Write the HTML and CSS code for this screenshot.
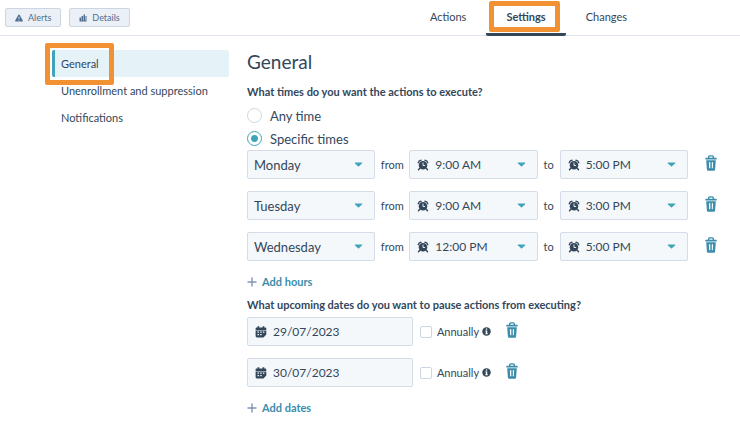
FILE: index.html
```html
<!DOCTYPE html>
<html lang="en">
<head>
  <meta charset="UTF-8">
  <meta name="viewport" content="width=device-width, initial-scale=1.0">
  <title>Workflow Settings</title>
  <link rel="stylesheet" href="styles.css">
</head>
<body>
  <svg class="sprite" aria-hidden="true">
    <symbol id="icon-alert" viewBox="0 0 16 16">
      <path fill="currentColor" fill-rule="evenodd" d="M8 1a1.4 1.4 0 0 1 1.2.7l6.4 11.2A1.4 1.4 0 0 1 14.4 15H1.6a1.4 1.4 0 0 1-1.2-2.1L6.8 1.7A1.4 1.4 0 0 1 8 1zM7 5.5l.3 4.5h1.4L9 5.5zM7 11.3v1.9h2v-1.9z"/>
    </symbol>
    <symbol id="icon-chart" viewBox="0 0 16 16">
      <path fill="currentColor" d="M1 7h3v6H1zM5 4h3v9H5zM9 1h3v12H9zM13 4h2v9h-2zM1 13h14v2H1z"/>
    </symbol>
    <symbol id="icon-clock" viewBox="0 0 24 24">
      <circle cx="12" cy="12.5" r="8.5" fill="currentColor"/>
      <path fill="none" stroke="currentColor" stroke-width="2.8" stroke-linecap="round" d="M2.500 7.500C3 4.500 5 2.800 8 2.500M21.500 7.500C21 4.500 19 2.800 16 2.500M5.500 18.500L3 21.500M18.500 18.500l2.500 3"/>
      <path fill="none" stroke="#f5f8fa" stroke-width="1.8" stroke-linecap="round" d="M12 8v5h3.5"/>
    </symbol>
    <symbol id="icon-caret" viewBox="0 0 10 6">
      <path fill="#3fa3b9" d="M1 .5h8a.6.6 0 0 1 .4 1L5.6 5.2a.9.9 0 0 1-1.2 0L.6 1.5A.6.6 0 0 1 1 .5z"/>
    </symbol>
    <symbol id="icon-trash" viewBox="0 0 12 16">
      <path fill="none" stroke="currentColor" stroke-width="1.4" d="M3.7 3V1.9Q3.7.9 4.7.9h2.6q1 0 1 1V3"/>
      <rect x=".3" y="2.800" width="11.4" height="1.7" rx=".6" fill="currentColor"/>
      <path fill="currentColor" fill-rule="evenodd" d="M1.2 5.3h9.600l-.7 9.200a1.300 1.300 0 0 1-1.300 1.200H3.200a1.300 1.300 0 0 1-1.300-1.200zM3.900 7.300l.3 6h1.100v-6zM6.800 7.300v6h1l.3-6z"/>
    </symbol>
    <symbol id="icon-calendar" viewBox="0 0 12 12">
      <path fill="currentColor" d="M1.5 1.5h1V.3h1.7v1.2h3.4V.3h1.7v1.2h1q1 0 1 1V4H.6V2.5q0-1 .9-1zM.6 4.6h10.7v4L8.5 11.500H2q-1.400 0-1.400-1.400z"/>
      <path fill="#f5f8fa" d="M2.5 5.6h1.5v1.2H2.5zM5.2 5.6h1.5v1.2H5.2zM7.900 5.600h1.500v1.200H7.900zM2.500 8h1.500v1.200H2.500zM5.200 8h1.500v1.200H5.200z"/>
    </symbol>
    <symbol id="icon-info" viewBox="0 0 10 10">
      <circle cx="5" cy="5" r="4.7" fill="currentColor"/>
      <path fill="#fff" d="M4.3 1.8h1.5v1.3H4.3zM3.7 4h2.1v3h.6v1H3.7V7h.6V5h-.6z"/>
    </symbol>
    <symbol id="icon-plus" viewBox="0 0 10 10">
      <path fill="none" stroke="#7c98b6" stroke-width="1.4" stroke-linecap="round" d="M5 1v8M1 5h8"/>
    </symbol>
  </svg>

  <header class="top-bar">
    <div class="toolbar">
      <button class="tool-btn"><svg class="tool-icon"><use href="#icon-alert"/></svg>Alerts</button>
      <button class="tool-btn"><svg class="tool-icon"><use href="#icon-chart"/></svg>Details</button>
    </div>
    <nav class="tabs">
      <a href="#actions">Actions</a>
      <a href="#settings" class="active">Settings</a>
      <a href="#changes">Changes</a>
    </nav>
  </header>

  <div class="page">
    <nav class="sidebar">
      <a href="#general" class="active">General</a>
      <a href="#unenrollment">Unenrollment and suppression</a>
      <a href="#notifications">Notifications</a>
    </nav>

    <main class="content">
      <h1>General</h1>

      <h2>What times do you want the actions to execute?</h2>
      <div class="radio-group">
        <label class="radio"><input type="radio" name="times">Any time</label>
        <label class="radio"><input type="radio" name="times" checked>Specific times</label>
      </div>

      <div class="rows">
        <div class="time-row">
          <div class="field">
            <select aria-label="Day"><option>Monday</option></select>
            <svg class="caret"><use href="#icon-caret"/></svg>
          </div>
          <span class="word">from</span>
          <div class="field with-icon">
            <select aria-label="Start time"><option>9:00 AM</option></select>
            <svg class="field-icon"><use href="#icon-clock"/></svg>
            <svg class="caret"><use href="#icon-caret"/></svg>
          </div>
          <span class="word">to</span>
          <div class="field with-icon">
            <select aria-label="End time"><option>5:00 PM</option></select>
            <svg class="field-icon"><use href="#icon-clock"/></svg>
            <svg class="caret"><use href="#icon-caret"/></svg>
          </div>
          <button class="delete-btn" aria-label="Delete"><svg><use href="#icon-trash"/></svg></button>
        </div>

        <div class="time-row">
          <div class="field">
            <select aria-label="Day"><option>Tuesday</option></select>
            <svg class="caret"><use href="#icon-caret"/></svg>
          </div>
          <span class="word">from</span>
          <div class="field with-icon">
            <select aria-label="Start time"><option>9:00 AM</option></select>
            <svg class="field-icon"><use href="#icon-clock"/></svg>
            <svg class="caret"><use href="#icon-caret"/></svg>
          </div>
          <span class="word">to</span>
          <div class="field with-icon">
            <select aria-label="End time"><option>3:00 PM</option></select>
            <svg class="field-icon"><use href="#icon-clock"/></svg>
            <svg class="caret"><use href="#icon-caret"/></svg>
          </div>
          <button class="delete-btn" aria-label="Delete"><svg><use href="#icon-trash"/></svg></button>
        </div>

        <div class="time-row">
          <div class="field">
            <select aria-label="Day"><option>Wednesday</option></select>
            <svg class="caret"><use href="#icon-caret"/></svg>
          </div>
          <span class="word">from</span>
          <div class="field with-icon">
            <select aria-label="Start time"><option>12:00 PM</option></select>
            <svg class="field-icon"><use href="#icon-clock"/></svg>
            <svg class="caret"><use href="#icon-caret"/></svg>
          </div>
          <span class="word">to</span>
          <div class="field with-icon">
            <select aria-label="End time"><option>5:00 PM</option></select>
            <svg class="field-icon"><use href="#icon-clock"/></svg>
            <svg class="caret"><use href="#icon-caret"/></svg>
          </div>
          <button class="delete-btn" aria-label="Delete"><svg><use href="#icon-trash"/></svg></button>
        </div>
      </div>
      <button class="add-btn"><svg><use href="#icon-plus"/></svg>Add hours</button>

      <h2>What upcoming dates do you want to pause actions from executing?</h2>
      <div class="rows">
        <div class="date-row">
          <div class="field with-icon">
            <input type="text" aria-label="Date" value="29/07/2023">
            <svg class="field-icon"><use href="#icon-calendar"/></svg>
          </div>
          <label class="check"><input type="checkbox">Annually</label>
          <svg class="info"><use href="#icon-info"/></svg>
          <button class="delete-btn" aria-label="Delete"><svg><use href="#icon-trash"/></svg></button>
        </div>
        <div class="date-row">
          <div class="field with-icon">
            <input type="text" aria-label="Date" value="30/07/2023">
            <svg class="field-icon"><use href="#icon-calendar"/></svg>
          </div>
          <label class="check"><input type="checkbox">Annually</label>
          <svg class="info"><use href="#icon-info"/></svg>
          <button class="delete-btn" aria-label="Delete"><svg><use href="#icon-trash"/></svg></button>
        </div>
      </div>
      <button class="add-btn"><svg><use href="#icon-plus"/></svg>Add dates</button>
    </main>
  </div>
</body>
</html>
```
FILE: styles.css
```css
*,
*::after {
  margin: 0;
  padding: 0;
  box-sizing: border-box;
}

body {
  background: #fff;
  color: #33475b;
  font-family: Lato, 'Liberation Sans', sans-serif;
  font-size: 11px;
  line-height: 16px;
}

button, input, select {
  font: inherit;
  color: inherit;
}

button {
  border: none;
  background: none;
  cursor: pointer;
}

a {
  color: inherit;
  text-decoration: none;
}

svg {
  display: block;
  flex-shrink: 0;
}

.sprite {
  display: none;
}

/* Top bar */
.top-bar {
  display: flex;
  justify-content: space-between;
  height: 36px;
  padding: 0 93px 0 5px;
  border-bottom: 1px solid #dfe3eb;
}

.toolbar {
  display: flex;
  align-items: center;
  gap: 8px;
}

.tool-btn {
  display: flex;
  align-items: center;
  gap: 5px;
  height: 19px;
  padding: 0 9px;
  border: 1px solid #cbd6e2;
  border-radius: 2px;
  background: #eaf0f6;
  color: #506e91;
  font-size: 9px;
}

.tool-icon {
  width: 8px;
  height: 8px;
}

.tabs {
  display: flex;
}

.tabs a {
  position: relative;
  height: 36px;
  padding: 9px 20px 0;
}

.tabs .active {
  border-bottom: 3px solid #33475b;
  border-radius: 2px;
  font-weight: 700;
}

/* Orange callout frames */
.tabs .active::after,
.sidebar .active::after {
  content: '';
  position: absolute;
  border: 5px solid #f29132;
  border-radius: 2px;
  pointer-events: none;
}

.tabs .active::after {
  inset: 1px 6px 1px 3px;
}

.sidebar .active::after {
  top: -7px;
  left: -10px;
  width: 69px;
  height: 42px;
}

/* Layout */
.page {
  display: grid;
  grid-template-columns: 177px minmax(0, 1fr);
  gap: 18px;
  padding: 14px 5px 0 52px;
}

.sidebar a {
  display: block;
  position: relative;
  height: 27px;
  padding: 6px 0 0 9px;
  white-space: nowrap;
}

.sidebar .active {
  padding-left: 6px;
  border-left: 3px solid #3fa3b9;
  border-radius: 2px;
  background: #e5f3f8;
}

h1 {
  font-size: 19px;
  font-weight: 400;
  line-height: 24px;
  margin-bottom: 10px;
}

h2 {
  font-size: 11px;
  font-weight: 700;
  line-height: 16px;
}

/* Options */
.radio-group {
  padding-top: 4px;
}

.radio {
  display: flex;
  align-items: center;
  gap: 8px;
  width: fit-content;
  height: 23px;
  font-size: 13px;
}

.radio input {
  appearance: none;
  width: 15px;
  height: 15px;
  border: 1px solid #cbd6e2;
  border-radius: 50%;
}

.radio input:checked {
  border-color: #3fa3b9;
  background: radial-gradient(circle, #3fa3b9 3px, #fff 4px);
}

/* Fields */
.rows {
  display: grid;
  gap: 12px;
}

.time-row {
  display: grid;
  grid-template-columns: 1fr 34px 1fr 22px 1fr 47px;
  align-items: center;
}

.word {
  text-align: center;
}

.field {
  display: grid;
  align-items: center;
}

.field > * {
  grid-area: 1 / 1;
}

.field select,
.field input {
  appearance: none;
  width: 100%;
  height: 29px;
  padding: 0 6px;
  border: 1px solid #d3dce7;
  border-radius: 2px;
  background: #f5f8fa;
  font-size: 13px;
}

.with-icon select,
.with-icon input {
  padding-left: 25px;
  font-size: 12px;
}

.field svg {
  pointer-events: none;
}

.field-icon {
  width: 12px;
  height: 12px;
  margin-left: 8px;
}

.caret {
  justify-self: end;
  width: 9px;
  height: 5px;
  margin-right: 12px;
}

.delete-btn {
  justify-self: center;
  color: #3b8dab;
}

.delete-btn svg {
  width: 12px;
  height: 16px;
  margin-bottom: 4px;
}

.add-btn {
  display: flex;
  align-items: center;
  gap: 5px;
  height: 16px;
  margin: 13px 0 7px;
  color: #3b8dab;
  font-weight: 700;
}

.add-btn svg {
  width: 10px;
  height: 10px;
}

h2 + .rows {
  padding-top: 4px;
}

.date-row {
  display: flex;
  align-items: center;
}

.date-row .field {
  width: 34%;
}

.check {
  display: flex;
  align-items: center;
  gap: 5px;
  margin: 0 3px 0 7px;
}

.check input {
  appearance: none;
  width: 12px;
  height: 12px;
  border: 1px solid #cbd6e2;
  border-radius: 2px;
}

.info {
  width: 9px;
  height: 9px;
}

.date-row .delete-btn {
  margin-left: 15px;
}
```
